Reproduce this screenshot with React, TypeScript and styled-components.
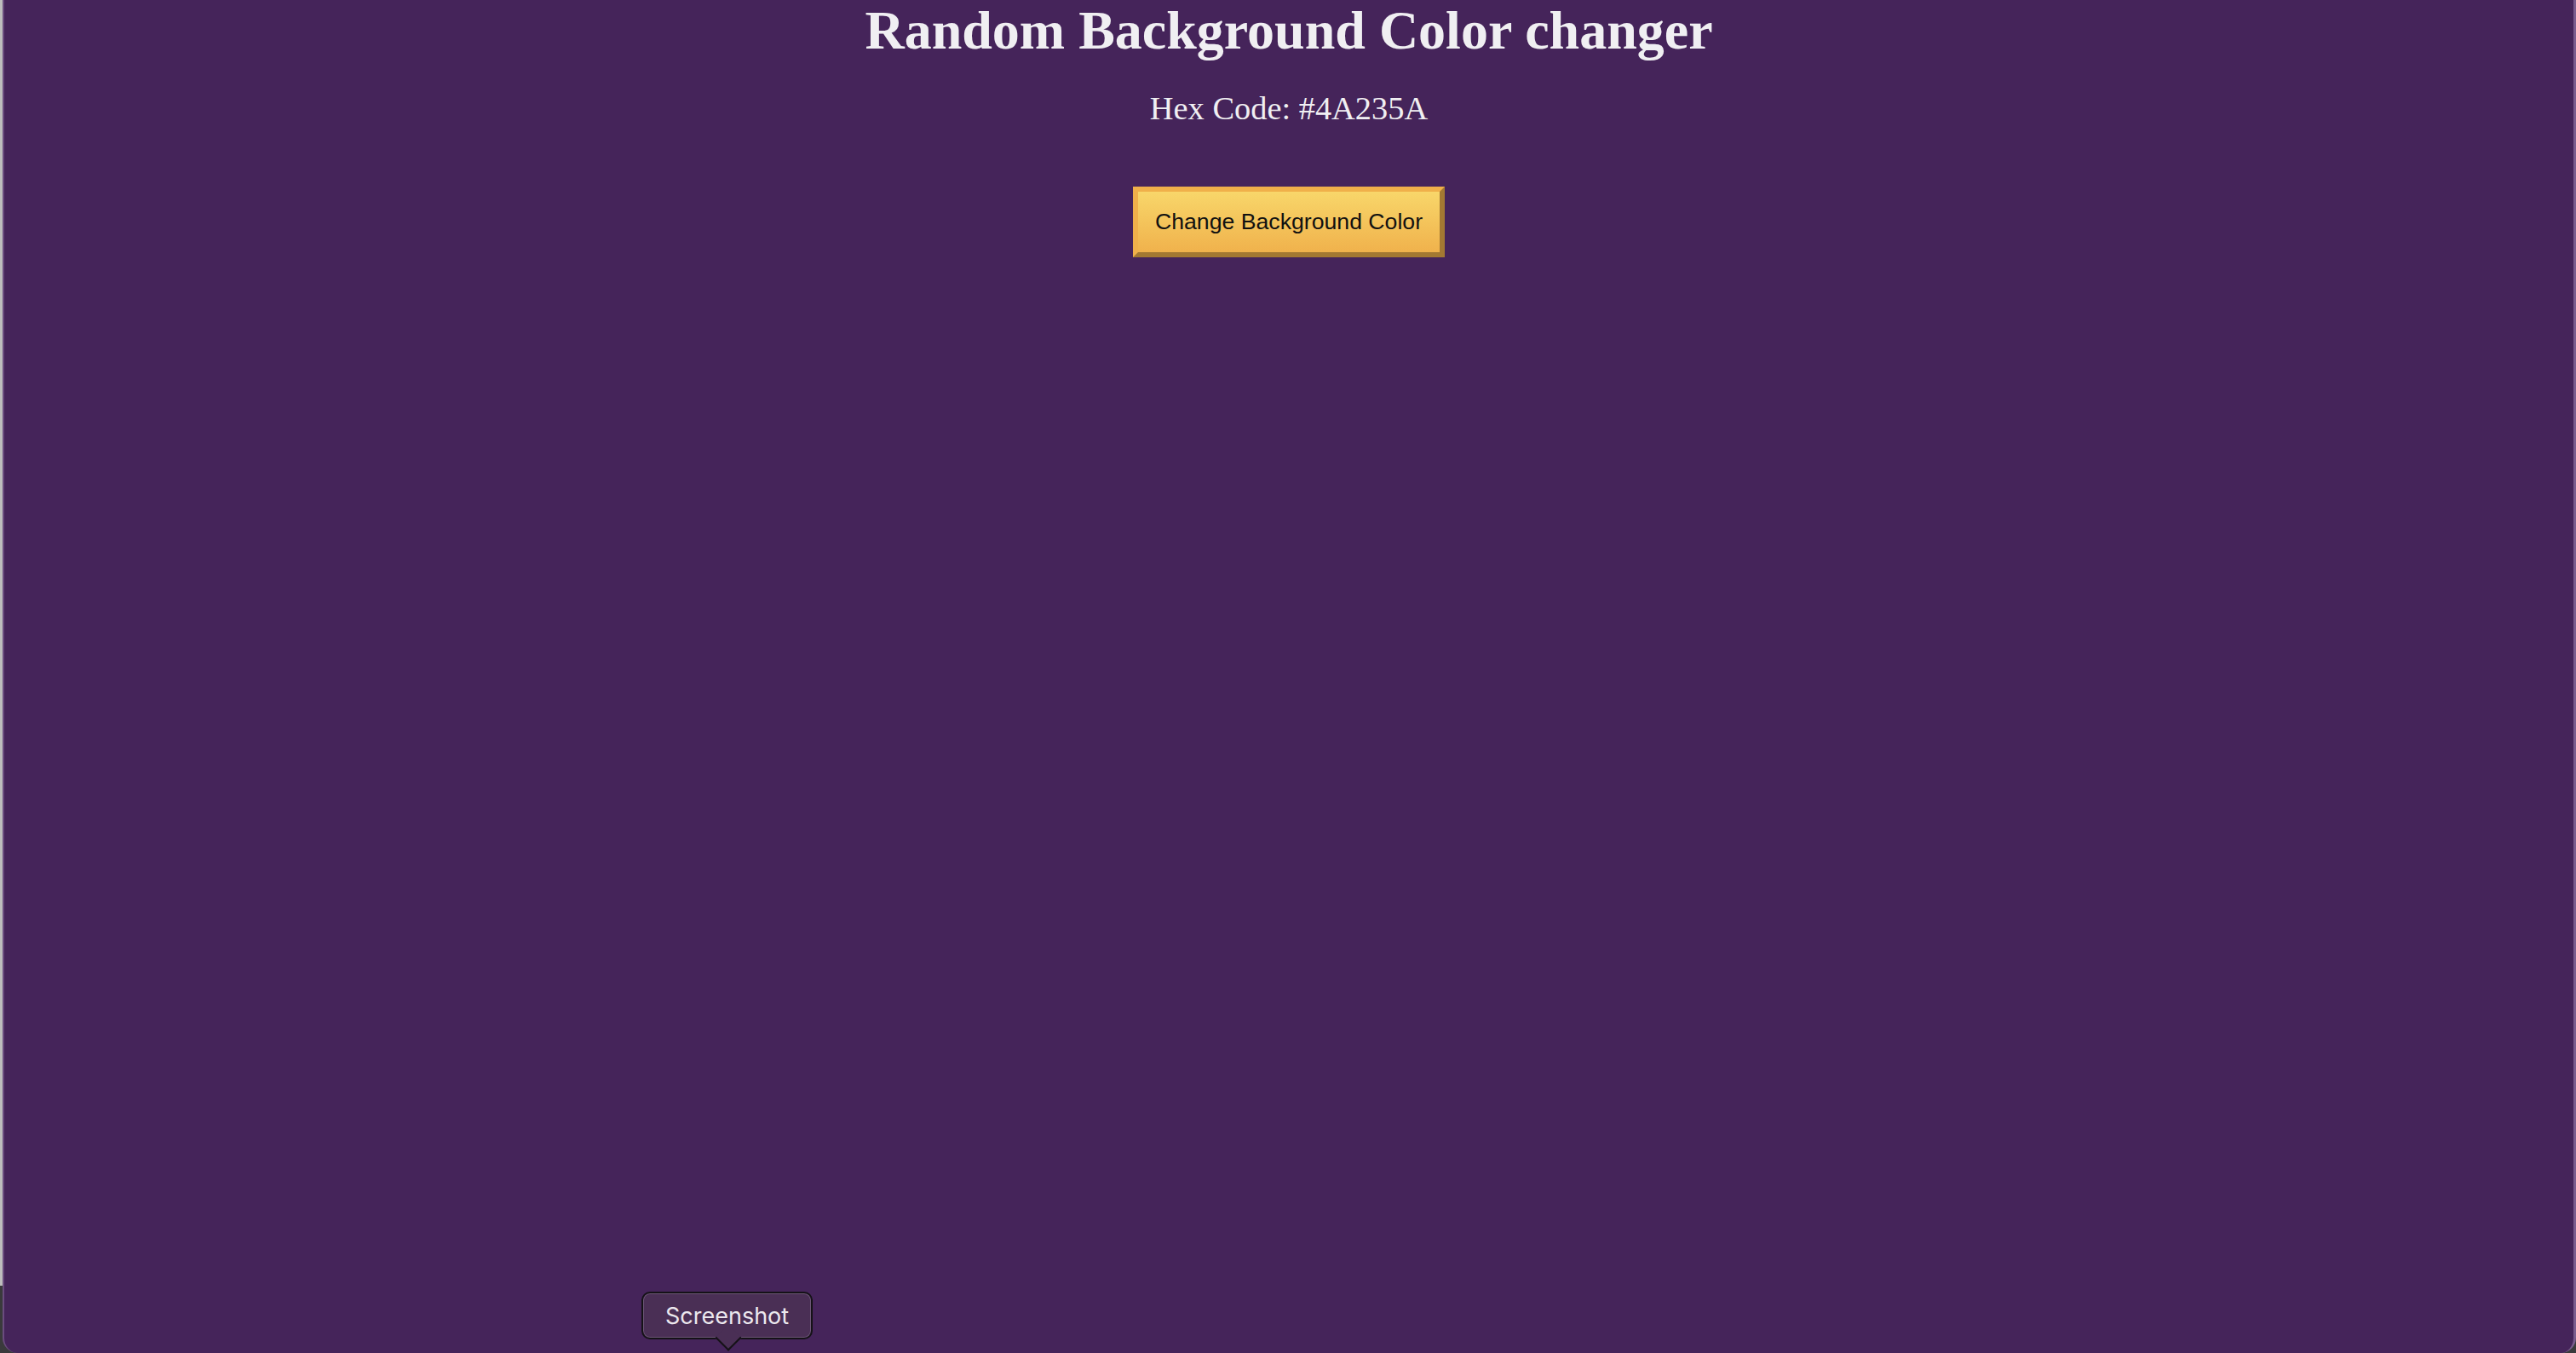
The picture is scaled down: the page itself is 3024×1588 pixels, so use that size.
import React from "react";
import styled, { createGlobalStyle } from "styled-components";

const Global = createGlobalStyle`
  html, body {
    margin: 0;
    padding: 0;
    height: 100%;
    background: #3a3a3c;
  }
  #root { height: 100%; }
`;

const Frame = styled.div`
  height: 100vh;
  box-sizing: border-box;
  padding-left: 3px;
  background: linear-gradient(to bottom, #bdbdbd 0, #bdbdbd 95%, #3a3a3c 95%);
  display: flex;
`;

const Page = styled.main`
  flex: 1;
  position: relative;
  box-sizing: border-box;
  background: #45245a;
  border-left: 2px solid #6a4c7e;
  border-right: 3px solid #7a5c8e;
  border-radius: 0 0 18px 18px;
  display: flex;
  flex-direction: column;
  align-items: center;
  overflow: hidden;
`;

const Title = styled.h1`
  margin: 0;
  font-family: "Liberation Serif", "Times New Roman", serif;
  font-weight: 700;
  font-size: 64px;
  color: #f0eff2;
  line-height: 71px;
`;

const HexLine = styled.h3`
  margin: 35px 0 0;
  font-family: "Liberation Serif", "Times New Roman", serif;
  font-weight: 400;
  font-size: 38.4px;
  line-height: 43px;
  color: #f0eff2;
`;

const ChangeButton = styled.button`
  margin-top: 70px;
  padding: 20px 20px;
  font-family: "Liberation Sans", Arial, sans-serif;
  font-size: 26.67px;
  line-height: 31px;
  color: #111;
  background: linear-gradient(to bottom, #f8d66a, #f0b24c);
  border-width: 6px;
  border-style: solid;
  border-color: #f0b04a #a37832 #a37832 #f0b04a;
  cursor: pointer;
`;

const Tooltip = styled.div`
  position: absolute;
  left: 748px;
  bottom: 16px;
  padding: 0 26px;
  height: 52px;
  display: flex;
  align-items: center;
  font-family: Inter, "Noto Sans", sans-serif;
  font-size: 27px;
  color: #ece8ee;
  background: #4a2f55;
  border: 2px solid #151217;
  box-shadow: inset 0 0 0 1px #6c5676;
  border-radius: 10px;
`;

const Arrow = styled.div`
  position: absolute;
  left: 50%;
  bottom: -14px;
  width: 20px;
  height: 20px;
  margin-left: -10px;
  background: #4a2f55;
  border-right: 2px solid #151217;
  border-bottom: 2px solid #151217;
  transform: rotate(45deg) translate(-2px, -2px);
`;

export default function App() {
  return (
    <>
      <Global />
      <Frame>
        <Page>
          <Title>Random Background Color changer</Title>
          <HexLine>Hex Code: #4A235A</HexLine>
          <ChangeButton>Change Background Color</ChangeButton>
          <Tooltip>
            Screenshot
            <Arrow />
          </Tooltip>
        </Page>
      </Frame>
    </>
  );
}
